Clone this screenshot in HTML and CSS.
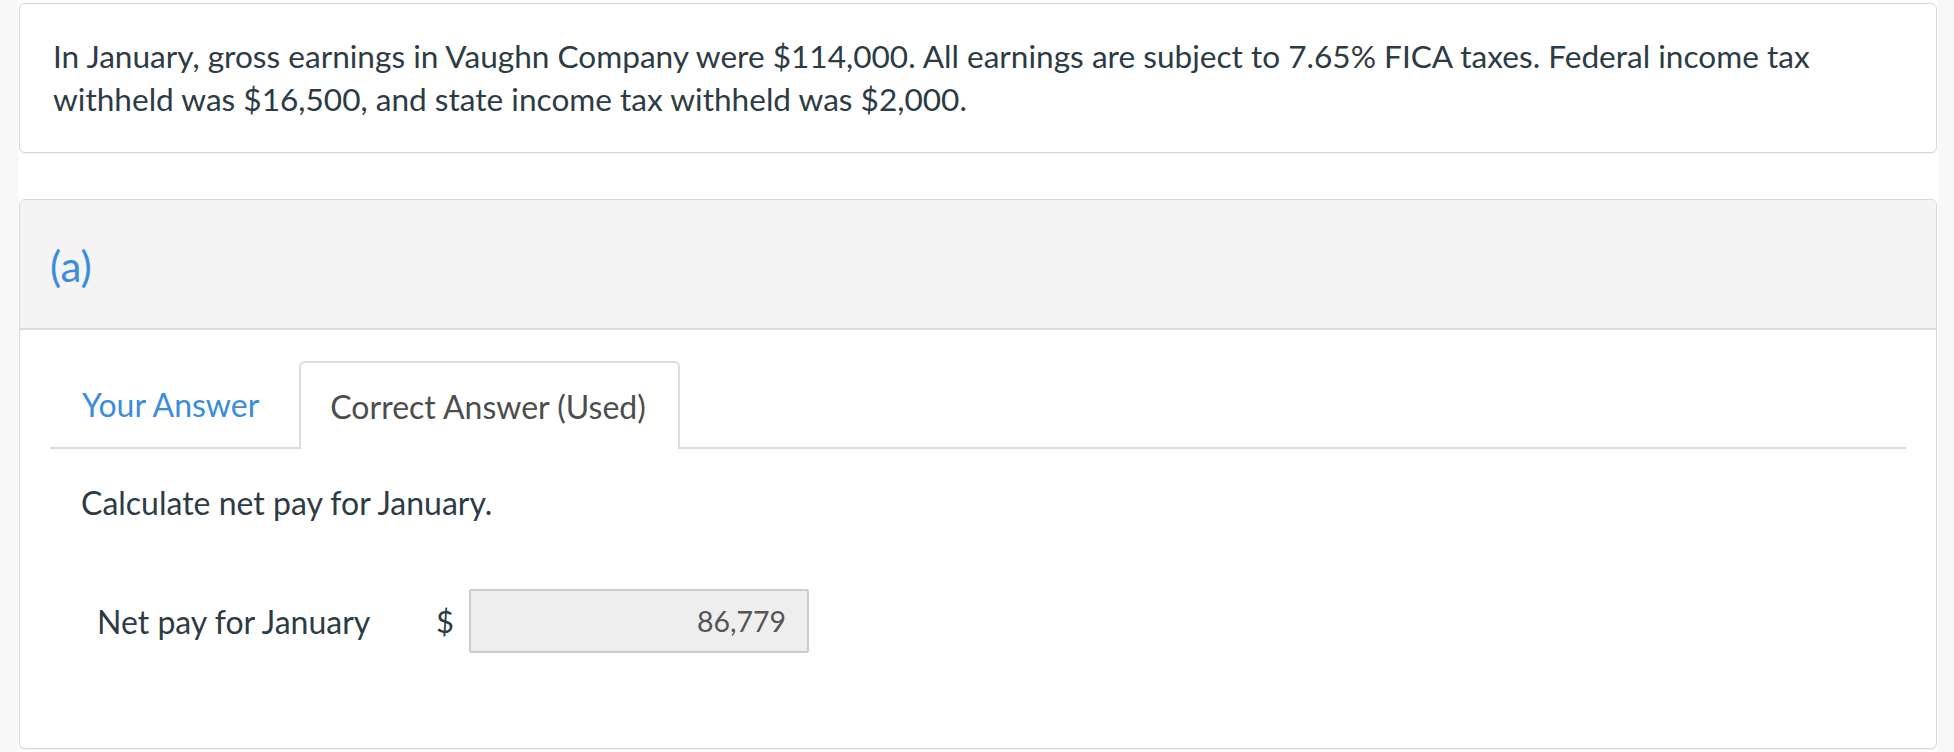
FILE: index.html
```html
<!DOCTYPE html>
<html lang="en">
<head>
<meta charset="utf-8">
<title>Net pay</title>
<link rel="stylesheet" href="styles.css">
</head>
<body>
<div class="page">
  <div class="card intro">
    <p class="intro-text">In January, gross earnings in Vaughn Company were $114,000. All earnings are subject to 7.65% FICA taxes. Federal income tax withheld was $16,500, and state income tax withheld was $2,000.</p>
  </div>
  <div class="card part">
    <div class="part-head"><span class="part-label">(a)</span></div>
    <div class="part-body">
      <div class="tabs">
        <div class="tab tab-link">Your Answer</div>
        <div class="tab tab-active">Correct Answer (Used)</div>
      </div>
      <div class="panel">
        <p class="question">Calculate net pay for January.</p>
        <div class="answer-row">
          <span class="answer-label">Net pay for January</span>
          <span class="currency">$</span>
          <div class="answer-box">86,779</div>
        </div>
      </div>
    </div>
  </div>
</div>
</body>
</html>
```
FILE: styles.css
```css
html, body {
  margin: 0;
  padding: 0;
}
body {
  background: #f8f8f8;
  font-family: Lato, "Open Sans", "Liberation Sans", sans-serif;
  color: #2d3b45;
}
.page {
  width: 1920px;
  margin-left: 18px;
  background: #ffffff;
  padding: 3px 1px 0;
  box-sizing: border-box;
  height: 752px;
}
.card {
  border: 1px solid #d8d8d8;
  border-radius: 6px;
  box-shadow: 0 1px 1px rgba(0, 0, 0, 0.06);
  background: #fff;
}
.intro {
  padding: 31px 33px;
}
.intro-text {
  margin: 0;
  font-size: 31.6px;
  line-height: 43px;
}
.part {
  margin-top: 46px;
  overflow: hidden;
}
.part-head {
  height: 128px;
  background: #f4f4f4;
  border-bottom: 2px solid #dcdcdc;
  display: flex;
  align-items: center;
  padding-left: 30px;
}
.part-label {
  font-size: 42px;
  color: #3b8ddc;
  position: relative;
  top: 2px;
}
.part-body {
  padding: 31px 30px 95px;
}
.tabs {
  display: flex;
  border-bottom: 2px solid #dcdcdc;
}
.tab {
  height: 86px;
  box-sizing: border-box;
  display: flex;
  align-items: center;
  padding: 0 32px;
  font-size: 32px;
}
.tab-link {
  color: #3b8ddc;
  margin-right: 8px;
}
.tab-active {
  color: #4d4d4d;
  background: #fff;
  border: 2px solid #dcdcdc;
  border-bottom: none;
  border-radius: 6px 6px 0 0;
  padding: 0 32px 0 29px;
  margin-bottom: -2px;
  height: 88px;
}
.panel {
  padding: 32px 31px 0;
}
.question {
  margin: 0;
  font-size: 32px;
  line-height: 43px;
}
.answer-row {
  margin-top: 65px;
  padding-left: 16px;
  display: flex;
  align-items: center;
  height: 64px;
}
.answer-label {
  width: 339px;
  flex: none;
  font-size: 32px;
}
.currency {
  font-size: 31px;
  width: 16px;
  margin-right: 17px;
}
.answer-box {
  width: 340px;
  height: 64px;
  box-sizing: border-box;
  background: #eeeeee;
  border: 2px solid #cccccc;
  border-radius: 2px;
  display: flex;
  align-items: center;
  justify-content: flex-end;
  padding-right: 21px;
  font-size: 28.5px;
  color: #555555;
}
```
